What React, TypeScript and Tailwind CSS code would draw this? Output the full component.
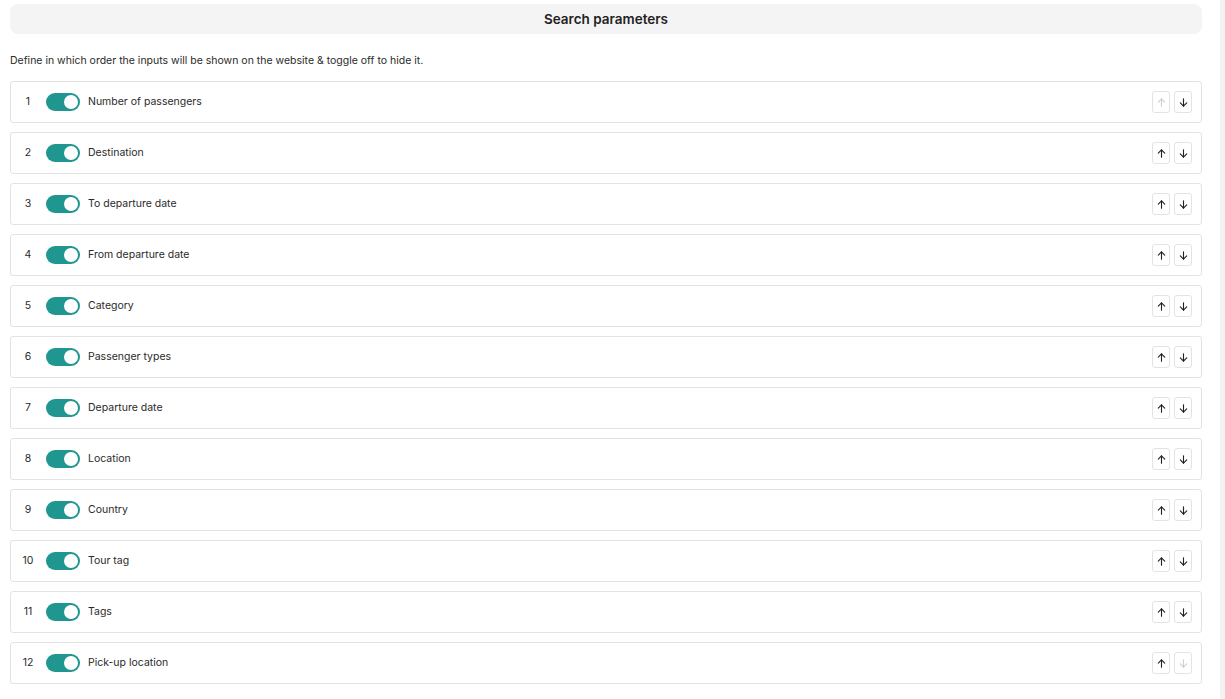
import React, { useState } from 'react';

const initialItems = [
  'Number of passengers',
  'Destination',
  'To departure date',
  'From departure date',
  'Category',
  'Passenger types',
  'Departure date',
  'Location',
  'Country',
  'Tour tag',
  'Tags',
  'Pick-up location',
];

const ArrowUp = () => (
  <svg width="11" height="11" viewBox="0 0 24 24" fill="none" stroke="currentColor" strokeWidth="2.4" strokeLinecap="round" strokeLinejoin="round">
    <path d="M12 20V4" />
    <path d="M5 11l7-7 7 7" />
  </svg>
);

const ArrowDown = () => (
  <svg width="11" height="11" viewBox="0 0 24 24" fill="none" stroke="currentColor" strokeWidth="2.4" strokeLinecap="round" strokeLinejoin="round">
    <path d="M12 4v16" />
    <path d="M5 13l7 7 7-7" />
  </svg>
);

export default function App() {
  const [items, setItems] = useState(initialItems.map(label => ({ label, on: true })));

  const move = (i: number, dir: number) => {
    const j = i + dir;
    if (j < 0 || j >= items.length) return;
    const next = [...items];
    [next[i], next[j]] = [next[j], next[i]];
    setItems(next);
  };

  const toggle = (i: number) =>
    setItems(prev => prev.map((it, k) => (k === i ? { ...it, on: !it.on } : it)));

  return (
    <div className="flex min-h-[699px] bg-white font-['Inter',sans-serif] text-[#1f2328]">
      <div className="flex-1 pl-[10px] pr-[18px] pt-[4px]">
        <div className="h-[30px] rounded-lg bg-[#f4f4f4] flex items-center justify-center">
          <h2 className="text-[13.5px] font-semibold text-[#222]">Search parameters</h2>
        </div>

        <p className="mt-[20px] text-[10.5px] text-[#2a2a2a] leading-[14px]">
          Define in which order the inputs will be shown on the website &amp; toggle off to hide it.
        </p>

        <div className="mt-[13px] flex flex-col gap-[9px]">
          {items.map((it, i) => (
            <div
              key={it.label}
              className="h-[42px] rounded-[3px] border border-[#e3e3e3] bg-white flex items-center pl-[11px] pr-[9px]"
            >
              <span className="w-[12px] text-center text-[10.5px] text-[#2a2a2a]">{i + 1}</span>
              <button
                onClick={() => toggle(i)}
                className={`ml-[12px] w-[34px] h-[18px] rounded-full flex items-center px-[2px] ${
                  it.on ? 'bg-[#1f9690] justify-end' : 'bg-[#d0d0d0] justify-start'
                }`}
              >
                <span className="w-[14px] h-[14px] rounded-full bg-white block" />
              </button>
              <span className="ml-[8px] text-[10.5px] text-[#2a2a2a]">{it.label}</span>

              <div className="ml-auto flex gap-[4px]">
                <button
                  onClick={() => move(i, -1)}
                  disabled={i === 0}
                  className={`w-[18px] h-[22px] rounded-[3px] border border-[#e3e3e3] bg-white flex items-center justify-center ${
                    i === 0 ? 'text-[#cfcfcf]' : 'text-[#222]'
                  }`}
                >
                  <ArrowUp />
                </button>
                <button
                  onClick={() => move(i, 1)}
                  disabled={i === items.length - 1}
                  className={`w-[18px] h-[22px] rounded-[3px] border border-[#e3e3e3] bg-white flex items-center justify-center ${
                    i === items.length - 1 ? 'text-[#cfcfcf]' : 'text-[#222]'
                  }`}
                >
                  <ArrowDown />
                </button>
              </div>
            </div>
          ))}
        </div>
      </div>
      <div className="w-[5px] bg-[#f3f3f3]" />
    </div>
  );
}
